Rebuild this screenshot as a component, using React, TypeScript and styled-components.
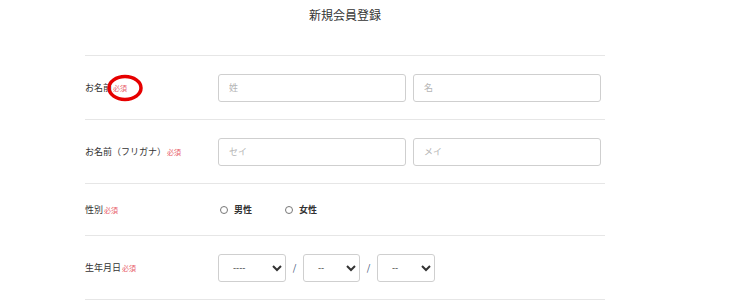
import React from "react";
import styled, { createGlobalStyle } from "styled-components";

const Global = createGlobalStyle`
  html, body { margin: 0; padding: 0; background: #fff; }
  body { font-family: "Noto Sans CJK JP", "Noto Sans", sans-serif; color: #333; }
`;

const Page = styled.div`
  width: 520px;
  margin-left: 85px;
`;

const Title = styled.h1`
  margin: 0;
  height: 55px;
  padding-top: 7px;
  box-sizing: border-box;
  text-align: center;
  font-size: 12px;
  font-weight: 400;
  line-height: 16px;
  color: #333;
`;

const Row = styled.div<{ $h: number }>`
  display: flex;
  align-items: center;
  height: ${(p) => p.$h}px;
  border-top: 1px solid #e6e6e6;
  &:last-child { border-bottom: 1px solid #e6e6e6; }
`;

const Label = styled.div`
  position: relative;
  width: 133px;
  flex: none;
  display: flex;
  align-items: center;
  font-size: 9px;
  color: #333;
`;

const Required = styled.span`
  margin-left: 1px;
  font-size: 7px;
  color: #e8606a;
`;

const Fields = styled.div`
  display: flex;
  align-items: center;
  gap: 7px;
`;

const TextInput = styled.input`
  width: 188px;
  height: 28px;
  box-sizing: border-box;
  border: 1px solid #cfcfcf;
  border-radius: 3px;
  padding: 0 10px;
  font-family: inherit;
  font-size: 9px;
  color: #333;
  outline: none;
  &::placeholder { color: #b5b5b5; }
`;

const RadioGroup = styled.div`
  display: flex;
  align-items: center;
  gap: 33px;
  padding-left: 2px;
`;

const RadioLabel = styled.label`
  display: flex;
  align-items: center;
  gap: 6px;
  font-size: 9px;
  font-weight: 700;
  color: #333;
`;

const RadioDot = styled.span`
  width: 8px;
  height: 8px;
  border: 1px solid #777;
  border-radius: 50%;
  box-sizing: border-box;
  display: inline-block;
`;

const DateFields = styled.div`
  display: flex;
  align-items: center;
`;

const Select = styled.select<{ $w: number }>`
  width: ${(p) => p.$w}px;
  height: 28px;
  box-sizing: border-box;
  border: 1px solid #cfcfcf;
  border-radius: 3px;
  background: #fff;
  padding: 0 8px 0 10px;
  font-family: "Noto Sans CJK JP", sans-serif;
  font-size: 9px;
  color: #333;
  outline: none;
`;

const Slash = styled.span`
  width: 17px;
  text-align: center;
  font-size: 9px;
  color: #2b3f6b;
`;

const Mark = styled.svg`
  position: absolute;
  left: 21px;
  top: 50%;
  transform: translateY(-50%);
  pointer-events: none;
`;

export default function App() {
  return (
    <>
      <Global />
      <Page>
        <Title>新規会員登録</Title>
        <Row $h={63}>
          <Label>
            お名前<Required>必須</Required>
            <Mark width="38" height="30" viewBox="0 0 38 30">
              <ellipse cx="19" cy="15" rx="16" ry="11.5" fill="none" stroke="#e60000" strokeWidth="3.5" />
            </Mark>
          </Label>
          <Fields>
            <TextInput placeholder="姓" />
            <TextInput placeholder="名" />
          </Fields>
        </Row>
        <Row $h={63}>
          <Label>
            お名前（フリガナ）<Required>必須</Required>
          </Label>
          <Fields>
            <TextInput placeholder="セイ" />
            <TextInput placeholder="メイ" />
          </Fields>
        </Row>
        <Row $h={51}>
          <Label>
            性別<Required>必須</Required>
          </Label>
          <RadioGroup>
            <RadioLabel>
              <RadioDot />男性
            </RadioLabel>
            <RadioLabel>
              <RadioDot />女性
            </RadioLabel>
          </RadioGroup>
        </Row>
        <Row $h={63}>
          <Label>
            生年月日<Required>必須</Required>
          </Label>
          <DateFields>
            <Select $w={68}><option>----</option></Select>
            <Slash>/</Slash>
            <Select $w={57}><option>--</option></Select>
            <Slash>/</Slash>
            <Select $w={58}><option>--</option></Select>
          </DateFields>
        </Row>
      </Page>
    </>
  );
}
